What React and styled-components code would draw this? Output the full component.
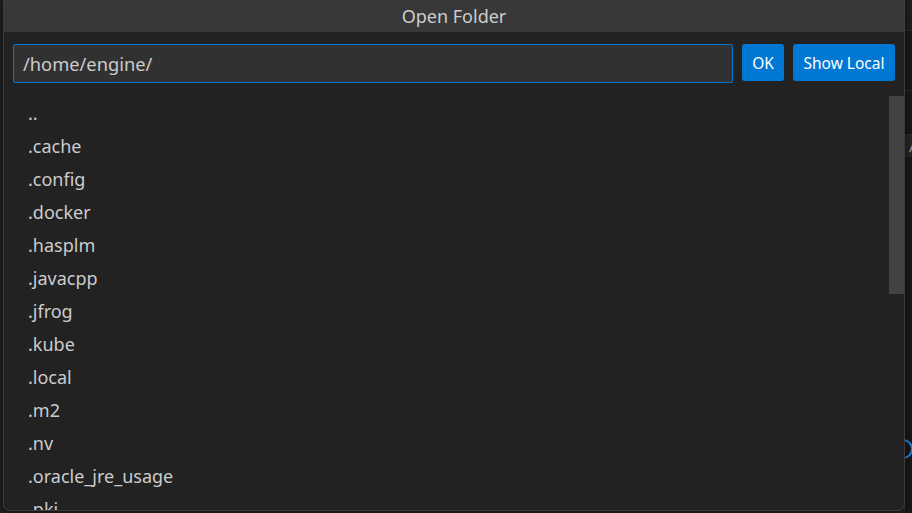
import React from "react";
import styled, { createGlobalStyle } from "styled-components";

const GlobalStyle = createGlobalStyle`
  html, body { margin: 0; padding: 0; background: #181818; }
  * { box-sizing: border-box; }
`;

const Stage = styled.div`
  position: relative;
  width: 912px;
  height: 513px;
  overflow: hidden;
  background: #1f1f1f;
  font-family: "Noto Sans", "Open Sans", sans-serif;
`;

const Backdrop = styled.div`
  display: flex;
  justify-content: flex-end;
  height: 100%;
`;

const SideStrip = styled.div`
  width: 8px;
  height: 100%;
  display: flex;
  flex-direction: column;
  background: #181818;
  border-left: 1px solid #2b2b2b;
`;

const StripBand = styled.div`
  height: ${(p) => p.$h}px;
  flex: none;
  background: ${(p) => p.$bg || "transparent"};
  border-bottom: ${(p) => (p.$line ? "1px solid #2b2b2b" : "none")};
  color: #9d9d9d;
  font-size: 15px;
  line-height: ${(p) => p.$h}px;
  overflow: hidden;
  white-space: nowrap;
`;

const Ring = styled.div`
  width: 20px;
  height: 20px;
  flex: none;
  margin-left: -12px;
  border: 2px solid #1a86e8;
  border-radius: 50%;
`;

const Dialog = styled.div`
  position: absolute;
  left: 3px;
  top: 0;
  width: 902px;
  height: 511px;
  display: flex;
  flex-direction: column;
  background: #222222;
  border: 1px solid #3c3c3c;
  border-top: none;
  border-radius: 0 0 7px 7px;
  overflow: hidden;
  box-shadow: 0 0 8px rgba(0, 0, 0, 0.5);
`;

const TitleBar = styled.div`
  height: 32px;
  flex: none;
  display: flex;
  align-items: center;
  justify-content: center;
  padding-bottom: 1px;
  background: #383838;
  color: #cccccc;
  font-size: 18px;
`;

const InputRow = styled.div`
  display: flex;
  align-items: flex-start;
  gap: 9px;
  padding: 12px 9px 0 9px;
  flex: none;
`;

const PathInput = styled.div`
  flex: 1;
  height: 39px;
  display: flex;
  align-items: center;
  padding: 0 9px;
  background: #313131;
  border: 1px solid #0078d4;
  border-radius: 2px;
  color: #cccccc;
  font-size: 18.3px;
`;

const Button = styled.div`
  width: ${(p) => p.$w}px;
  height: 37px;
  flex: none;
  display: flex;
  align-items: center;
  justify-content: center;
  background: #0078d4;
  border-radius: 3px;
  color: #ffffff;
  font-size: 15.5px;
`;

const ListArea = styled.div`
  position: relative;
  flex: 1;
  margin-top: 13px;
  overflow: hidden;
`;

const Row = styled.div`
  height: 33px;
  display: flex;
  align-items: center;
  padding-left: 24px;
  color: #cccccc;
  font-size: 18px;
  white-space: nowrap;
`;

const Scrollbar = styled.div`
  position: absolute;
  right: 0;
  top: 0;
  width: 15px;
  height: 198px;
  background: #434343;
`;

const items = [
  "..",
  ".cache",
  ".config",
  ".docker",
  ".hasplm",
  ".javacpp",
  ".jfrog",
  ".kube",
  ".local",
  ".m2",
  ".nv",
  ".oracle_jre_usage",
  ".pki",
];

export default function App() {
  return (
    <>
      <GlobalStyle />
      <Stage>
        <Backdrop>
          <SideStrip>
            <StripBand $h={31} $bg="#1f1f1f" $line />
            <StripBand $h={60} $line />
            <StripBand $h={44} $line />
            <StripBand $h={22} $bg="#252526" $line>
              &nbsp;A
            </StripBand>
            <StripBand $h={282} />
            <Ring />
          </SideStrip>
        </Backdrop>
        <Dialog>
          <TitleBar>Open Folder</TitleBar>
          <InputRow>
            <PathInput>/home/engine/</PathInput>
            <Button $w={42}>OK</Button>
            <Button $w={102}>Show Local</Button>
          </InputRow>
          <ListArea>
            {items.map((name) => (
              <Row key={name}>{name}</Row>
            ))}
            <Scrollbar />
          </ListArea>
        </Dialog>
      </Stage>
    </>
  );
}
